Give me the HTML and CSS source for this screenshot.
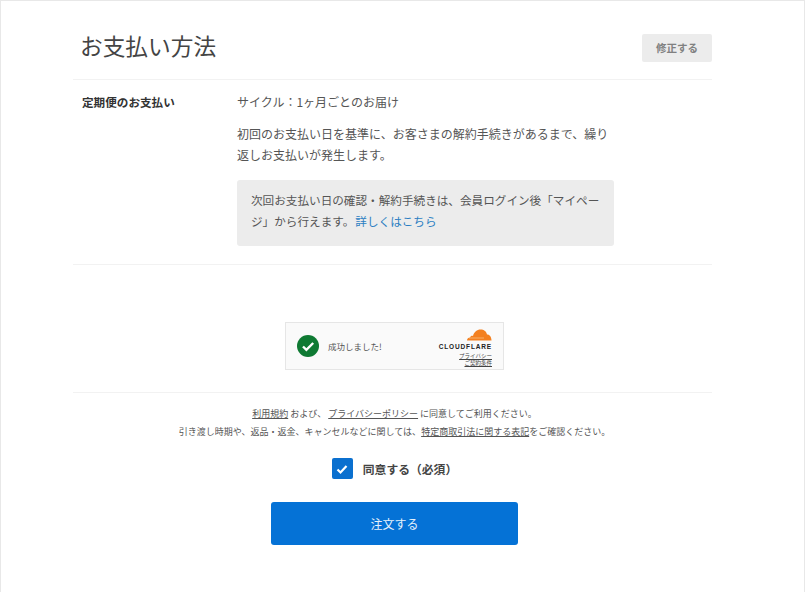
FILE: index.html
```html
<!DOCTYPE html>
<html lang="ja">
<head>
<meta charset="utf-8">
<title>お支払い方法</title>
<link rel="stylesheet" href="styles.css">
</head>
<body>
<main class="page">
  <header class="head">
    <h1 class="title">お支払い方法</h1>
    <a class="edit">修正する</a>
  </header>
  <section class="row">
    <div class="label">定期便のお支払い</div>
    <div class="detail">
      <p class="cycle">サイクル：1ヶ月ごとのお届け</p>
      <p class="desc">初回のお支払い日を基準に、お客さまの解約手続きがあるまで、繰り返しお支払いが発生します。</p>
      <div class="note">次回お支払い日の確認・解約手続きは、会員ログイン後「マイペー<br>ジ」から行えます。<a class="more">詳しくはこちら</a></div>
    </div>
  </section>
  <div class="captcha-wrap">
    <div class="captcha">
      <svg class="ok" viewBox="0 0 22 22" width="22" height="22"><circle cx="11" cy="11" r="11" fill="#0f7a33"/><path d="M6 11.5l3.4 3.4L16.2 8" fill="none" stroke="#fff" stroke-width="2.4"/></svg>
      <span class="ok-text">成功しました!</span>
      <div class="cf">
        <svg class="cloud" viewBox="0 0 26 12" width="26" height="12"><path d="M1 11.5c0-2 1.500-3 3-3 .5-1.500 2-2 3-1.500C8 3 11 .5 14.500.5c3.500 0 6 2 6.500 5 2.500-.2 4.500 2.500 4.500 6z" fill="#f38020"/><path d="M3 9h15" stroke="#fbd0a0" stroke-width=".6"/></svg>
        <div class="cf-name">CLOUDFLARE</div>
        <div class="cf-links">
          <div class="cf-link">プライバシー</div>
          <div class="cf-link">ご契約条件</div>
        </div>
      </div>
    </div>
  </div>
  <section class="agree">
    <p class="terms"><u>利用規約</u> および、 <u>プライバシーポリシー</u> に同意してご利用ください。</p>
    <p class="terms">引き渡し時期や、返品・返金、キャンセルなどに関しては、<u>特定商取引法に関する表記</u>をご確認ください。</p>
    <div class="check-row">
      <span class="box"><svg viewBox="0 0 20 20" width="20" height="20"><path d="M5.500 10.500l3 3 6-6.500" fill="none" stroke="#fff" stroke-width="2.200"/></svg></span>
      <span class="check-label">同意する（必須）</span>
    </div>
    <button class="submit">注文する</button>
  </section>
</main>
</body>
</html>
```
FILE: styles.css
```css
* { box-sizing: border-box; }
html, body { margin: 0; padding: 0; }
body {
  width: 805px;
  height: 592px;
  overflow: hidden;
  background: #fff;
  border: 1px solid #e8e8e8;
  border-bottom: 0;
  font-family: "Noto Sans CJK JP", "Noto Sans", sans-serif;
  color: #444;
}
.page { width: 639px; margin-left: 72px; }
.head {
  height: 79px;
  display: flex;
  align-items: flex-start;
  justify-content: space-between;
  padding-left: 7px;
  border-bottom: 1px solid #f2f2f2;
}
.title {
  margin: 29px 0 0;
  font-size: 22.700px;
  line-height: 32px;
  font-weight: 400;
  color: #444;
}
.edit {
  margin-top: 33px;
  width: 70px;
  height: 28px;
  border-radius: 2px;
  background: #ececec;
  color: #808080;
  font-size: 10.500px;
  font-weight: 700;
  line-height: 27px;
  text-align: center;
}
.row {
  display: flex;
  height: 185px;
  padding: 11px 0 0 9px;
  border-bottom: 1px solid #f2f2f2;
}
.label {
  width: 155px;
  font-size: 11.600px;
  font-weight: 700;
  line-height: 22px;
  color: #333;
}
.detail { width: 377px; font-size: 12px; line-height: 21px; color: #555; }
.cycle { margin: 0 0 10px; line-height: 22px; }
.desc { margin: 0 0 15px; width: 374px; }
.note {
  height: 66px;
  padding: 10px 14px;
  border-radius: 3px;
  background: #ececec;
  font-size: 11.620px;
  white-space: nowrap;
}
.more { margin-left: 1px; color: #2b7ec2; }
.captcha-wrap {
  height: 128px;
  padding-top: 57px;
  display: flex;
  justify-content: center;
  border-bottom: 1px solid #f2f2f2;
}
.captcha {
  width: 219px;
  height: 48px;
  margin-left: 4px;
  background: #fafafa;
  border: 1px solid #e6e6e6;
  display: flex;
  align-items: center;
  padding: 0 11px;
}
.ok { flex: none; }
.ok-text { margin-left: 9px; font-size: 8.500px; color: #555; }
.cf {
  margin-left: auto;
  padding-top: 4px;
  display: flex;
  flex-direction: column;
  align-items: flex-end;
}
.cloud { display: block; }
.cf-name {
  margin-top: 2px;
  font-family: "Liberation Sans", sans-serif;
  font-size: 6.500px;
  line-height: 7px;
  font-weight: 700;
  letter-spacing: .85px;
  color: #222;
}
.cf-links { margin-top: 3px; }
.cf-link {
  font-size: 5.500px;
  line-height: 7px;
  text-align: right;
  color: #444;
  text-decoration: underline;
}
.agree {
  display: flex;
  flex-direction: column;
  align-items: center;
  padding: 12px 0 0 4px;
}
.terms {
  margin: 0;
  font-size: 9px;
  line-height: 18px;
  color: #555;
}
.check-row {
  margin-top: 17px;
  display: flex;
  align-items: center;
  gap: 10px;
}
.box {
  width: 21px;
  height: 21px;
  border-radius: 2px;
  background: #0b70cf;
  display: flex;
  align-items: center;
  justify-content: center;
}
.check-label {
  font-size: 11.800px;
  font-weight: 700;
  color: #444;
}
.submit {
  margin-top: 23px;
  width: 247px;
  height: 43px;
  border: 0;
  border-radius: 3px;
  background: #0572d6;
  color: #e6f1fb;
  font-family: inherit;
  font-size: 12px;
}
```
